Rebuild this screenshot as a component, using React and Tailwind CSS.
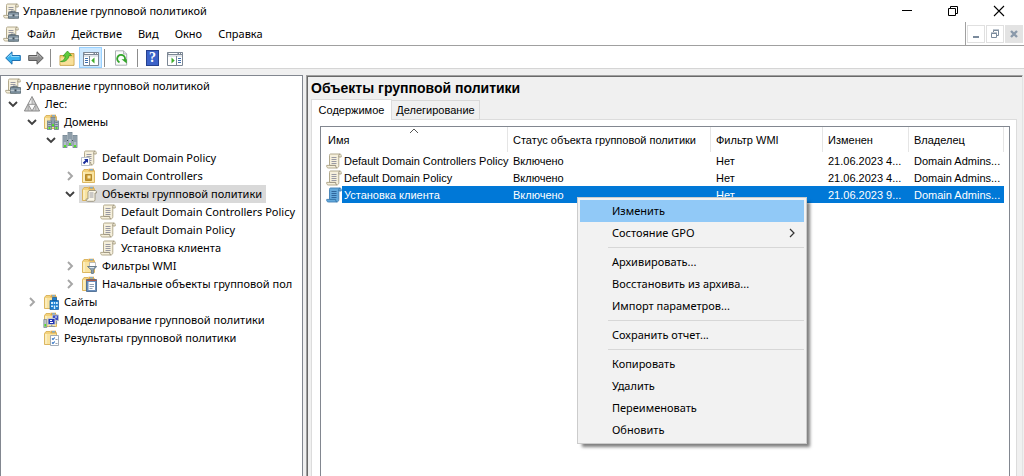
import React, { useState } from "react";

const Scroll = ({ blue }) => (
  <>
    <path
      d="M4.500 1h9.200c1 0 1.500.6 1.500 1.500v1.500h-2.400v8.500c0 1.400-.8 2.500-2 2.500H2.400c-1 0-1.700-.7-1.700-1.800v-.8h2.800V2.500c0-1 .3-1.500 1-1.500z"
      fill={blue ? "#63a9dc" : "#f6f0dc"}
      stroke={blue ? "#3f7fb5" : "#aaa082"}
      strokeWidth="0.9"
    />
    <path
      d="M12.800 4V2.500c0-.8.4-1.400 1-1.400M3.500 12.400h6.200c0 1.500.4 2.500 1.200 2.500"
      fill="none"
      stroke={blue ? "#2f6ea3" : "#8d8570"}
      strokeWidth="0.9"
    />
    <path
      d="M5.500 4.500h5M5.500 6.500h5M5.500 8.500h5M5.500 10.500h5"
      stroke={blue ? "#2a5f94" : "#8e8e9c"}
      strokeWidth="0.900"
    />
  </>
);

const Folder = () => (
  <>
    <path
      d="M1.500 3.500L3 1.500h4l1 1.200h5.500v11.800h-12z"
      fill="#f3d27c"
      stroke="#d8b056"
      strokeWidth="0.9"
    />
    <path d="M7.500 0.700h5.500v2.500H7.500z" fill="#e0a94a" />
    <path d="M9 1.200h3v1.200H9z" fill="#6db1e8" />
    <path d="M2 4h11v10H2z" fill="#f9e3a0" />
    <path d="M2 4h2v10H2z" fill="#fbedbd" />
  </>
);

const Server = ({ x, y, h }) => (
  <g>
    <rect x={x} y={y} width="4" height={h} fill="#b3bfc8" stroke="#6d7f8d" strokeWidth="0.8" />
    <path
      d={`M${x + 0.7} ${y + 1.5}h2.6M${x + 0.7} ${y + 3.5}h2.6M${x + 0.7} ${y + 5.5}h2.6`}
      stroke="#5b6f7e"
      strokeWidth="0.8"
    />
    <rect x={x + 1} y={y + h - 2.4} width="2" height="2" fill="#4fe01f" />
  </g>
);

const glyphs = {
  console: (
    <>
      <Scroll />
      <path d="M8 9.500V8.200h4v1.300" fill="none" stroke="#566775" strokeWidth="1" />
      <path d="M5.500 9.500h10v5.800h-10z" fill="#8497a5" stroke="#54656f" strokeWidth="0.8" />
      <path d="M5.500 12.300h10" stroke="#d5dde2" strokeWidth="0.9" />
      <path d="M9.500 11.400h2v2h-2z" fill="#3f4e59" />
    </>
  ),
  gpo: <Scroll />,
  gpoBlue: <Scroll blue />,
  link: (
    <>
      <Scroll />
      <path d="M0.500 7.500h8v8h-8z" fill="#fff" stroke="#a9b3c0" strokeWidth="0.8" />
      <path d="M3 9h4v4l-1.300-1.300L3.200 14.200 1.800 12.800l2.500-2.500z" fill="#1b2f9c" />
    </>
  ),
  forest: (
    <>
      <path d="M8 0.500L15.600 15H0.400z" fill="#cfcfcf" stroke="#7f7f7f" strokeWidth="0.9" />
      <path d="M8 1.800v6.200H4.800z" fill="#f4f4f4" />
      <path d="M4.200 8.300h7.600L8 15z" fill="#fafafa" stroke="#8a8a8a" strokeWidth="0.9" />
      <path d="M8 1v7.300M4.200 8.300V15M11.800 8.300V15" stroke="#9c9c9c" strokeWidth="0.8" />
    </>
  ),
  domains: (
    <>
      <Folder />
      <Server x={8} y={3.500} h={9} />
      <Server x={4.500} y={7} h={8.500} />
      <Server x={11.500} y={7} h={8.500} />
    </>
  ),
  domain: (
    <>
      <Server x={6} y={0.500} h={13} />
      <Server x={1} y={3.500} h={12} />
      <Server x={11} y={3.500} h={12} />
      <path d="M5 8.500h1M10 8.500h1" stroke="#3c4b56" />
    </>
  ),
  ou: (
    <>
      <Folder />
      <path d="M4.500 6.500h6v6h-6z" fill="#c8962c" stroke="#a87c20" strokeWidth="0.8" />
      <path d="M6.500 7.500h3v3h-3z" fill="#f8e6ac" />
    </>
  ),
  objects: (
    <>
      <Folder />
      <path
        d="M8 4.500h6c1 0 1.500.5 1.500 1.500v1H14v6.500c0 1-.6 1.800-1.500 1.800H6.500c-.9 0-1.400-.5-1.400-1.500v-.8H7V6z"
        fill="#fbf7e8"
        stroke="#8d8570"
        strokeWidth="0.8"
      />
      <path d="M8.500 7h4M8.500 9h4M8.500 11h4" stroke="#8e8e9c" strokeWidth="0.9" />
    </>
  ),
  wmi: (
    <>
      <Folder />
      <path d="M8.500 4.500h6v4h-6z" fill="#fff" stroke="#a5a5a5" strokeWidth="0.7" />
      <path
        d="M6.500 8.500h9.200L12.400 12v3.500h-2V12z"
        fill="#8ea2b3"
        stroke="#5b7083"
        strokeWidth="0.8"
      />
      <path d="M8.500 9.500h4.500" stroke="#dfe8ef" />
    </>
  ),
  starter: (
    <>
      <Folder />
      <path d="M5.500 3.500h10v12h-10z" fill="#6a8fbd" stroke="#3f6189" strokeWidth="0.8" />
      <path d="M7.500 6h6.500v8H7.500z" fill="#fff" />
      <path d="M5.500 4.300h10" stroke="#b0513c" strokeWidth="1.2" />
      <path d="M8.500 8.500h4.500M8.500 10.500h4.500M8.500 12.500h3" stroke="#7889a0" strokeWidth="0.8" />
    </>
  ),
  sites: (
    <>
      <Folder />
      <path
        d="M9.500 3.500h4v3h-4zM7 6.500h8.500v9H7z"
        fill="#1f7fd0"
        stroke="#125a9c"
        strokeWidth="0.7"
      />
      <path
        d="M8 8h2v2H8zM10.800 8h1.400v2h-1.400zM13 8h1.800v2H13zM8 11.500h2V13H8zM13 11.500h1.800V13H13zM10.800 11.500h1.400V15h-1.400z"
        fill="#d4ecfd"
      />
    </>
  ),
  modeling: (
    <>
      <Folder />
      <path d="M0.800 7.500h3v8h-3z" fill="#b9c3cb" stroke="#76828c" strokeWidth="0.7" />
      <path d="M1.500 12h1.600v2.500H1.500z" fill="#4fe01f" />
      <path d="M9.500 3h6v5.500h-6z" fill="#3f4fc4" stroke="#b8bfc9" />
      <path d="M5 6.500h7v6H5z" fill="#2435b5" stroke="#c3c9d2" />
      <path d="M7 8.500h2M7 10.500h3M12 5h2" stroke="#fff" />
      <path d="M6 14.500h6M8.700 12.500v2M13.500 9v3" stroke="#8d97a1" strokeWidth="1.2" />
    </>
  ),
  results: (
    <>
      <Folder />
      <path d="M7.500 5.500h8v10h-8z" fill="#fff" stroke="#8d99a8" strokeWidth="0.8" />
      <path
        d="M9 8.500l1 1 1.800-2M9 12.500l1 1 1.800-2"
        fill="none"
        stroke="#2b6fc4"
        strokeWidth="1.1"
      />
      <path d="M12.500 9.500h2M12.500 13.500h2" stroke="#9aa5b1" />
    </>
  ),
  back: (
    <>
      <path
        d="M0.700 8L7 1.800v3.700h8.300v5H7v3.700z"
        fill="#38b0ee"
        stroke="#1c6fb0"
        strokeWidth="1"
        strokeLinejoin="round"
      />
      <path d="M2.500 7.500L6.200 4v2.500h8" fill="none" stroke="#8ed8fa" />
    </>
  ),
  forward: (
    <>
      <path
        d="M15.300 8L9 1.800v3.700H0.700v5H9v3.700z"
        fill="#8f8f8f"
        stroke="#5c5c5c"
        strokeWidth="1"
        strokeLinejoin="round"
      />
      <path d="M1.500 6.500h8V4l3.700 3.500" fill="none" stroke="#b5b5b5" />
    </>
  ),
  up: (
    <>
      <path d="M1 5.500h5l1-2h8v11.800H1z" fill="#f0cd6e" stroke="#c39a3c" strokeWidth="0.9" />
      <path d="M1.500 7.500h13v7.300h-13z" fill="#f9e09a" />
      <path
        d="M1.500 11.500c3-.5 4.500-2.500 4.800-5.500H4L8.500 1l4 4.500H10c-.5 4-4 7-8.500 6z"
        fill="#5fcb3c"
        stroke="#2f9420"
        strokeWidth="0.7"
      />
    </>
  ),
  panelLeft: (
    <>
      <path d="M0.500 2.500h15v13h-15z" fill="#fff" stroke="#7c8794" />
      <path d="M0.500 2h15v3h-15z" fill="#7c8794" />
      <path d="M1.500 3.500h9M12 3.500h1M14 3.500h1" stroke="#fff" />
      <path d="M1 6h14" stroke="#c6cdd5" />
      <path d="M6.500 6v9" stroke="#7c8794" />
      <path d="M2 8.500h3M2 10.500h3M2 12.500h3" stroke="#3f6fae" />
      <path d="M11.500 7.500v6L8.300 10.500z" fill="#3fae2a" />
    </>
  ),
  panelRight: (
    <>
      <path d="M0.500 2.500h15v13h-15z" fill="#fff" stroke="#7c8794" />
      <path d="M0.500 2h15v3h-15z" fill="#7c8794" />
      <path d="M1.500 3.500h9M12 3.500h1M14 3.500h1" stroke="#fff" />
      <path d="M1 6h14" stroke="#c6cdd5" />
      <path d="M9.500 6v9" stroke="#7c8794" />
      <path d="M11 8.500h3M11 10.500h3M11 12.500h3" stroke="#3f6fae" />
      <path d="M4.500 7.500v6l3.200-3z" fill="#3fae2a" />
    </>
  ),
  refresh: (
    <>
      <path
        d="M2.500 0.800h8l3.200 3.200v11.200H2.500z"
        fill="#fbfbfb"
        stroke="#a3a8ae"
        strokeWidth="0.9"
      />
      <path d="M10.500 0.800V4h3.200" fill="#dfe2e5" stroke="#a3a8ae" strokeWidth="0.8" />
      <path
        d="M6.500 12.300A3.900 3.900 0 1 1 11.800 10"
        fill="none"
        stroke="#33a52a"
        strokeWidth="1.900"
      />
      <path d="M8.500 9.300h5.300v4.200z" fill="#33a52a" />
    </>
  ),
};

const Icon = ({ name }) => (
  <svg className="size-4 shrink-0" viewBox="0 0 16 16" aria-hidden="true">
    {glyphs[name]}
  </svg>
);

const Chevron = ({ open }) => (
  <svg className="size-4" viewBox="0 0 16 16" fill="none" strokeWidth="1.9" aria-hidden="true">
    {open ? (
      <path d="M4 6l4 4 4-4" stroke="#404040" />
    ) : (
      <path d="M6 4l4 4-4 4" stroke="#a6a6a6" />
    )}
  </svg>
);

const menus = ["Файл", "Действие", "Вид", "Окно", "Справка"];

const tree = [
  {
    label: "Лес:",
    icon: "forest",
    open: true,
    children: [
      {
        label: "Домены",
        icon: "domains",
        open: true,
        children: [
          {
            label: "",
            icon: "domain",
            open: true,
            children: [
              { label: "Default Domain Policy", icon: "link" },
              { label: "Domain Controllers", icon: "ou", open: false },
              {
                label: "Объекты групповой политики",
                icon: "objects",
                open: true,
                selected: true,
                children: [
                  { label: "Default Domain Controllers Policy", icon: "gpo" },
                  { label: "Default Domain Policy", icon: "gpo" },
                  { label: "Установка клиента", icon: "gpo" },
                ],
              },
              { label: "Фильтры WMI", icon: "wmi", open: false },
              { label: "Начальные объекты групповой пол", icon: "starter", open: false },
            ],
          },
        ],
      },
      { label: "Сайты", icon: "sites", open: false },
      { label: "Моделирование групповой политики", icon: "modeling" },
      { label: "Результаты групповой политики", icon: "results" },
    ],
  },
];

const rows = [
  ["Default Domain Controllers Policy", "Включено", "Нет", "21.06.2023 4...", "Domain Admins..."],
  ["Default Domain Policy", "Включено", "Нет", "21.06.2023 4...", "Domain Admins..."],
  ["Установка клиента", "Включено", "Нет", "21.06.2023 9...", "Domain Admins..."],
];

const columns = [
  "Имя",
  "Статус объекта групповой политики",
  "Фильтр WMI",
  "Изменен",
  "Владелец",
];

const contextMenu = [
  ["Изменить", "Состояние GPO"],
  ["Архивировать...", "Восстановить из архива...", "Импорт параметров..."],
  ["Сохранить отчет..."],
  ["Копировать", "Удалить", "Переименовать", "Обновить"],
];

const TreeLabel = ({ icon, label, selected }) => (
  <span
    className={`flex h-[18px] items-center gap-[5px] pl-0.5 pr-1 ${selected ? "bg-[#d9d9d9]" : ""}`}
  >
    <Icon name={icon} />
    {label}
  </span>
);

const TreeItem = ({ node }) => {
  const [open, setOpen] = useState(node.open);
  return (
    <li>
      <div className="flex h-[18px] items-center whitespace-nowrap pl-0.5">
        <span className="flex w-[19px] shrink-0 justify-center">
          {node.open !== undefined && (
            <button aria-label="Развернуть" onClick={() => setOpen(!open)}>
              <Chevron open={open} />
            </button>
          )}
        </span>
        <TreeLabel {...node} />
      </div>
      {open && node.children && (
        <ul className="pl-[19px]">
          {node.children.map((child) => (
            <TreeItem key={child.label} node={child} />
          ))}
        </ul>
      )}
    </li>
  );
};

const TitleBar = () => (
  <header className="flex h-[22px] items-center pl-[3px] pr-0.5">
    <Icon name="console" />
    <h1 className="flex-1 pl-1">Управление групповой политикой</h1>
    <button className="flex h-5 w-[46px] items-center justify-center" aria-label="Свернуть">
      <svg className="size-3" viewBox="0 0 12 12" stroke="#000">
        <path d="M1 5.500h10" />
      </svg>
    </button>
    <button className="flex h-5 w-[46px] items-center justify-center" aria-label="Восстановить">
      <svg className="size-3" viewBox="0 0 12 12" fill="none" stroke="#000">
        <path d="M1.500 3.500h7v7h-7zM3.500 3.500v-2h7v7h-2" />
      </svg>
    </button>
    <button className="flex h-5 w-[46px] items-center justify-center" aria-label="Закрыть">
      <svg className="size-3" viewBox="0 0 12 12" stroke="#000" strokeWidth="1.1">
        <path d="M1 1l10 10M11 1L1 11" />
      </svg>
    </button>
  </header>
);

const MenuBar = () => (
  <div className="flex h-6 items-stretch border-b border-[#a0a0a0]">
    <nav className="flex flex-1 items-center pl-[3px]">
      <Icon name="console" />
      {menus.map((item) => (
        <button key={item} className="px-2">
          {item}
        </button>
      ))}
    </nav>
    <div className="flex items-center gap-px border-l border-[#a0a0a0] px-px">
      <button
        className="flex size-[18px] items-center justify-center border border-[#e0e0e0]"
        aria-label="Свернуть окно"
      >
        <svg className="size-3" viewBox="0 0 12 12" stroke="#7a8a9c" strokeWidth="2">
          <path d="M3 9h6" />
        </svg>
      </button>
      <button
        className="flex size-[18px] items-center justify-center border border-[#e0e0e0]"
        aria-label="Восстановить окно"
      >
        <svg className="size-3" viewBox="0 0 12 12" fill="none" stroke="#7a8a9c">
          <path d="M2.500 5.500h5v4h-5zM2 5h6M4.500 4V2.500h5v5H8M4 2h6" />
        </svg>
      </button>
      <button
        className="flex size-[18px] items-center justify-center bg-[#e3e3e3]"
        aria-label="Закрыть окно"
      >
        <svg className="size-3" viewBox="0 0 12 12" stroke="#8a99aa" strokeWidth="2.4">
          <path d="M3 3l6 6M9 3l-6 6" />
        </svg>
      </button>
    </div>
  </div>
);

const Separator = () => <span className="h-[18px] w-px bg-[#8c8c8c]" />;

const Toolbar = () => (
  <div className="flex h-[23px] items-center border-b border-[#d5d5d5] pl-[5px] pt-px">
    <button className="mr-[7px]" aria-label="Назад">
      <Icon name="back" />
    </button>
    <button className="mr-1.5" aria-label="Вперед">
      <Icon name="forward" />
    </button>
    <Separator />
    <button className="ml-2 mr-1" aria-label="Вверх">
      <Icon name="up" />
    </button>
    <button
      className="mr-0.5 flex h-[21px] w-[23px] items-center justify-center border border-[#99d1ff] bg-[#cce8ff]"
      aria-label="Дерево консоли"
    >
      <Icon name="panelLeft" />
    </button>
    <Separator />
    <button className="mx-2" aria-label="Обновить">
      <Icon name="refresh" />
    </button>
    <Separator />
    <button
      className="mx-2 flex h-4 w-[13px] items-center justify-center border border-[#26418f] bg-[#3c62c8] font-['Liberation_Serif',serif] text-[14px] font-bold leading-none text-white"
      aria-label="Справка"
    >
      ?
    </button>
    <button aria-label="Область действий">
      <Icon name="panelRight" />
    </button>
  </div>
);

const ContextMenu = () => (
  <div
    role="menu"
    className="absolute left-64 top-[70px] w-[230px] border border-[#ccc] bg-[#f2f2f2] p-0.5 font-['Noto_Sans',sans-serif] shadow-[4px_4px_3px_-1px_rgba(0,0,0,0.5)]"
  >
    {contextMenu.map((group, i) => (
      <div key={group[0]}>
        {i > 0 && <hr className="my-[3px] ml-7 border-t border-[#d7d7d7]" />}
        {group.map((item) => (
          <button
            key={item}
            role="menuitem"
            className={`flex h-[22px] w-full items-center justify-between pl-8 pr-1 text-left ${
              item === "Изменить" ? "bg-[#91c9f7]" : ""
            }`}
          >
            {item}
            {item === "Состояние GPO" && (
              <svg
                className="size-4"
                viewBox="0 0 16 16"
                fill="none"
                stroke="#333"
                strokeWidth="1.2"
              >
                <path d="M6 4l4 4-4 4" />
              </svg>
            )}
          </button>
        ))}
      </div>
    ))}
  </div>
);

const PolicyTable = () => (
  <table className="w-full table-fixed border-separate border-spacing-0 text-left">
    <colgroup>
      <col className="w-[187px]" />
      <col className="w-[203px]" />
      <col className="w-28" />
      <col className="w-[86px]" />
      <col />
    </colgroup>
    <thead>
      <tr className="h-[25px] whitespace-nowrap">
        {columns.map((name, i) => (
          <th
            key={name}
            className={`relative border-r border-[#e5e5e5] p-0 font-normal ${i === 0 ? "pl-[7px]" : "pl-[5px]"}`}
          >
            {name}
            {i === 0 && (
              <svg
                className="absolute left-1/2 top-0 h-2 w-3 -translate-x-1/2"
                viewBox="0 0 12 8"
                fill="none"
                stroke="#555"
              >
                <path d="M2 6l4-4 4 4" />
              </svg>
            )}
          </th>
        ))}
      </tr>
    </thead>
    <tbody>
      {rows.map((row) => {
        const selected = row[0] === "Установка клиента";
        return (
          <tr key={row[0]} className="h-[17px] whitespace-nowrap">
            {row.map((cell, i) => (
              <td
                key={columns[i]}
                className={`p-0 ${i > 0 ? "pl-[5px]" : ""} ${selected && i > 0 ? "bg-[#0078d7]" : ""} ${
                  selected ? "text-white" : ""
                }`}
              >
                {i === 0 ? (
                  <span className="flex h-[17px] items-center pl-[5px]">
                    <Icon name={selected ? "gpoBlue" : "gpo"} />
                    <span
                      className={`flex h-[17px] flex-1 items-center pl-0.5 ${selected ? "bg-[#0078d7]" : ""}`}
                    >
                      {cell}
                    </span>
                  </span>
                ) : (
                  cell
                )}
              </td>
            ))}
          </tr>
        );
      })}
    </tbody>
  </table>
);

export default function App() {
  return (
    <div className="flex min-h-screen flex-col bg-white font-['Noto_Sans',sans-serif] text-[11px] leading-4 text-black">
      <TitleBar />
      <MenuBar />
      <Toolbar />
      <div className="flex flex-1 gap-[3px] bg-[#f0f0f0] pr-px pt-1.5">
        <aside className="w-[303px] shrink-0 overflow-hidden border border-b-0 border-[#828790] bg-white pt-px">
          <div className="flex h-[18px] items-center pl-0.5">
            <TreeLabel icon="console" label="Управление групповой политикой" />
          </div>
          <ul>
            {tree.map((node) => (
              <TreeItem key={node.label} node={node} />
            ))}
          </ul>
        </aside>
        <main className="flex min-w-0 flex-1 flex-col border-l border-r border-t border-l-[#a0a0a0] border-r-[#e3e3e3] border-t-[#a0a0a0] font-['Liberation_Sans',sans-serif]">
          <div className="flex flex-1 flex-col border-l border-t border-[#696969] pl-[3px] pr-[5px]">
            <h2 className="text-[14px] font-bold leading-[22px]">Объекты групповой политики</h2>
            <div role="tablist" className="flex items-end">
              <button
                role="tab"
                aria-selected="true"
                className="relative -mb-px h-[21px] w-[81px] border border-b-0 border-[#dcdcdc] bg-white"
              >
                Содержимое
              </button>
              <button
                role="tab"
                aria-selected="false"
                className="h-[19px] w-[88px] border border-b-0 border-l-0 border-[#d9d9d9]"
              >
                Делегирование
              </button>
            </div>
            <div className="flex flex-1 flex-col border border-b-0 border-[#dcdcdc] bg-white pl-2 pr-1.5 pt-1.5">
              <div className="relative flex-1 border border-b-0 border-[#828790] pr-[5px]">
                <PolicyTable />
                <ContextMenu />
              </div>
            </div>
          </div>
        </main>
      </div>
    </div>
  );
}
